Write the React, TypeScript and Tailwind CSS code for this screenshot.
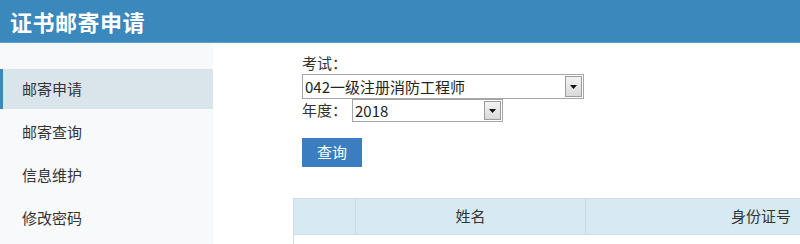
import React from "react";

const font = { fontFamily: '"Noto Sans CJK SC", "Noto Sans", sans-serif' };

function FakeSelect({ value, width, height }: { value: string; width: string; height: string }) {
  return (
    <div className={`flex items-stretch border border-[#a6a6a6] bg-white ${width} ${height}`}>
      <div className="flex-1 flex items-center pl-[2px] text-[15px] text-[#222] leading-none">{value}</div>
      <div className="w-[17px] my-[1px] mr-[1px] border border-[#9c9c9c] bg-gradient-to-b from-[#f4f4f4] to-[#d9d9d9] flex items-center justify-center">
        <svg width="7" height="4" viewBox="0 0 7 4">
          <path d="M0 0 L7 0 L3.5 4 Z" fill="#111" />
        </svg>
      </div>
    </div>
  );
}

export default function App() {
  const items = ["邮寄申请", "邮寄查询", "信息维护", "修改密码"];
  return (
    <div className="w-[800px] h-[244px] overflow-hidden flex flex-col bg-white" style={font}>
      <div className="h-[43px] shrink-0 bg-[#3a88bc] border-b border-[#5b9fcc] flex items-center pl-[10px]">
        <span className="text-white text-[22px] font-bold leading-none tracking-[0.5px]">证书邮寄申请</span>
      </div>
      <div className="flex flex-1 min-h-0">
        <div className="w-[213px] shrink-0 bg-[#f7f9fb] pt-[26px] flex flex-col gap-[3px]">
          {items.map((t, i) => (
            <div
              key={t}
              className={
                i === 0
                  ? "h-[40px] flex items-center pl-[19px] text-[15px] text-[#333] bg-[#d9e4eb] border-l-[3px] border-[#3a88bc]"
                  : "h-[40px] flex items-center pl-[22px] text-[15px] text-[#333]"
              }
            >
              {t}
            </div>
          ))}
        </div>
        <div className="flex-1 pl-[80px] pt-[10px] min-w-0">
          <div className="pl-[9px] text-[15px] text-[#333]">
            <div className="h-[21px] flex items-center">考试：</div>
            <FakeSelect value="042一级注册消防工程师" width="w-[282px]" height="h-[25px]" />
            <div className="h-[23px] flex items-center">
              <span className="w-[50px]">年度：</span>
              <FakeSelect value="2018" width="w-[151px]" height="h-[23px]" />
            </div>
            <button className="mt-[16px] w-[60px] h-[29px] bg-[#3a7ebf] text-white text-[15px] flex items-center justify-center">
              查询
            </button>
          </div>
          <div className="mt-[31px] w-[650px] text-[15px] text-[#333]">
            <div className="flex h-[37px] bg-[#d7eaf4] border border-[#d0dde6]">
              <div className="w-[62px] border-r border-[#c7d9e4]"></div>
              <div className="w-[230px] border-r border-[#c7d9e4] flex items-center justify-center">姓名</div>
              <div className="w-[350px] flex items-center justify-center">身份证号</div>
            </div>
            <div className="h-[20px] border-l border-[#d0dde6]"></div>
          </div>
        </div>
      </div>
    </div>
  );
}
